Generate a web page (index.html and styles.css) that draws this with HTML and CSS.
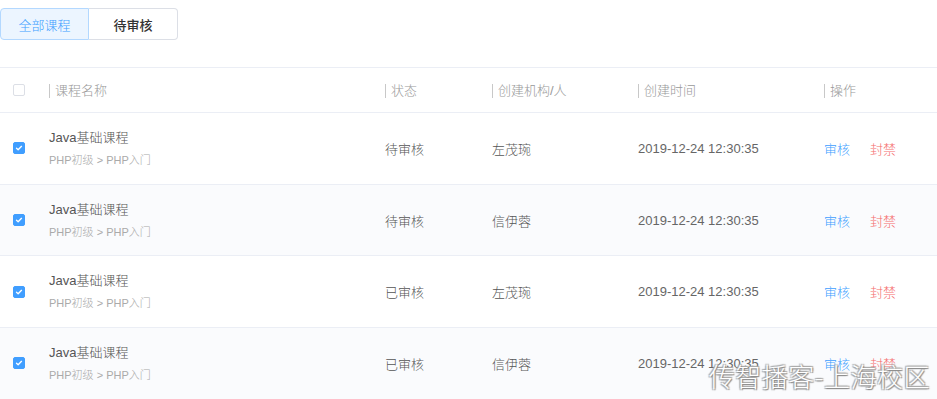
FILE: index.html
```html
<!DOCTYPE html>
<html lang="zh-CN">
<head>
    <meta charset="UTF-8">
    <meta name="viewport" content="width=device-width, initial-scale=1.0">
    <title>课程审核</title>
    <link rel="stylesheet" href="styles.css">
</head>
<body>
    <div class="page">
        <div class="tabs">
            <span class="tab active">全部课程</span>
            <span class="tab">待审核</span>
        </div>

        <table class="list">
            <colgroup>
                <col class="c-check">
                <col class="c-name">
                <col class="c-status">
                <col class="c-org">
                <col class="c-time">
                <col>
            </colgroup>
            <thead>
                <tr>
                    <th><span class="box"></span></th>
                    <th><span class="sep">课程名称</span></th>
                    <th><span class="sep">状态</span></th>
                    <th><span class="sep">创建机构/人</span></th>
                    <th><span class="sep">创建时间</span></th>
                    <th><span class="sep">操作</span></th>
                </tr>
            </thead>
            <tbody>
                <tr>
                    <td><span class="box checked"><svg viewBox="0 0 12 12"><path d="M3 6.2l2 2 4-4.2"/></svg></span></td>
                    <td><div class="title">Java基础课程</div><div class="sub">PHP初级 &gt; PHP入门</div></td>
                    <td>待审核</td>
                    <td>左茂琬</td>
                    <td class="time">2019-12-24 12:30:35</td>
                    <td><a class="op ok">审核</a><a class="op ban">封禁</a></td>
                </tr>
                <tr>
                    <td><span class="box checked"><svg viewBox="0 0 12 12"><path d="M3 6.2l2 2 4-4.2"/></svg></span></td>
                    <td><div class="title">Java基础课程</div><div class="sub">PHP初级 &gt; PHP入门</div></td>
                    <td>待审核</td>
                    <td>信伊蓉</td>
                    <td class="time">2019-12-24 12:30:35</td>
                    <td><a class="op ok">审核</a><a class="op ban">封禁</a></td>
                </tr>
                <tr>
                    <td><span class="box checked"><svg viewBox="0 0 12 12"><path d="M3 6.2l2 2 4-4.2"/></svg></span></td>
                    <td><div class="title">Java基础课程</div><div class="sub">PHP初级 &gt; PHP入门</div></td>
                    <td>已审核</td>
                    <td>左茂琬</td>
                    <td class="time">2019-12-24 12:30:35</td>
                    <td><a class="op ok">审核</a><a class="op ban">封禁</a></td>
                </tr>
                <tr>
                    <td><span class="box checked"><svg viewBox="0 0 12 12"><path d="M3 6.2l2 2 4-4.2"/></svg></span></td>
                    <td><div class="title">Java基础课程</div><div class="sub">PHP初级 &gt; PHP入门</div></td>
                    <td>已审核</td>
                    <td>信伊蓉</td>
                    <td class="time">2019-12-24 12:30:35</td>
                    <td><a class="op ok">审核</a><a class="op ban">封禁</a></td>
                </tr>
            </tbody>
        </table>

        <div class="watermark">传智播客-上海校区</div>
    </div>
</body>
</html>
```

FILE: styles.css
```css
body {
    margin: 0;
    font-family: "Liberation Sans", "Noto Sans CJK SC", sans-serif;
    font-weight: 300;
    color: #555;
    font-size: 13px;
    background: #fff;
}
.page {
    position: relative;
    width: 937px;
    height: 399px;
    overflow: hidden;
    padding-top: 8px;
    box-sizing: border-box;
}
.tabs {
    display: flex;
}
.tab {
    width: 89px;
    height: 32px;
    box-sizing: border-box;
    display: flex;
    align-items: center;
    justify-content: center;
    border: 1px solid #dcdfe6;
    border-left: none;
    font-size: 13px;
    font-weight: 500;
    color: #333;
}
.tab:last-child {
    border-radius: 0 4px 4px 0;
}
.tab.active {
    border: 1px solid #b3d8ff;
    background-color: #ecf5ff;
    color: #409eff;
    font-weight: 300;
    border-radius: 4px 0 0 4px;
}
.list {
    width: 100%;
    margin-top: 27px;
    border-collapse: collapse;
    table-layout: fixed;
    border-top: 1px solid #ebeef5;
}
.c-check { width: 49px; }
.c-name { width: 336px; }
.c-status { width: 107px; }
.c-org { width: 146px; }
.c-time { width: 186px; }
.list th {
    height: 44px;
    padding: 0;
    text-align: left;
    font-weight: 300;
    color: #999;
    border-bottom: 1px solid #ebeef5;
}
.list th:first-child,
.list td:first-child {
    padding-left: 13px;
}
.sep {
    display: inline-block;
    border-left: 1px solid #c8c8c8;
    padding-left: 5px;
    line-height: 14px;
    margin-top: -2px;
}
.list td {
    height: 71.7px;
    padding: 0;
    box-sizing: border-box;
    border-bottom: 1px solid #ebeef5;
    vertical-align: middle;
}
.list tbody tr:nth-child(even) td {
    background-color: #fafbfd;
}
.list td.time {
    color: #666;
}
.box {
    display: block;
    width: 12px;
    height: 12px;
    box-sizing: border-box;
    border: 1px solid #dcdfe6;
    border-radius: 2px;
    background: #fff;
}
.box.checked {
    background-color: #409eff;
    border-color: #409eff;
}
.box svg {
    display: block;
    width: 10px;
    height: 10px;
    fill: none;
    stroke: #fff;
    stroke-width: 1.6;
    stroke-linecap: round;
    stroke-linejoin: round;
}
.title {
    font-size: 13px;
    line-height: 16px;
    color: #555;
}
.sub {
    margin-top: 7px;
    font-size: 11px;
    line-height: 14px;
    color: #aaa;
}
.op {
    margin-right: 20px;
    cursor: pointer;
}
.op.ok { color: #409eff; }
.op.ban { color: #f56c6c; }
.watermark {
    position: absolute;
    right: 7px;
    bottom: 5px;
    font-family: "Noto Sans CJK SC", sans-serif;
    font-size: 26px;
    font-weight: 300;
    letter-spacing: 0.5px;
    color: #fff;
    text-shadow: 1px 1px 1px #888, -1px -1px 1px #aaa, 1px -1px 1px #aaa, -1px 1px 1px #aaa;
}
```
